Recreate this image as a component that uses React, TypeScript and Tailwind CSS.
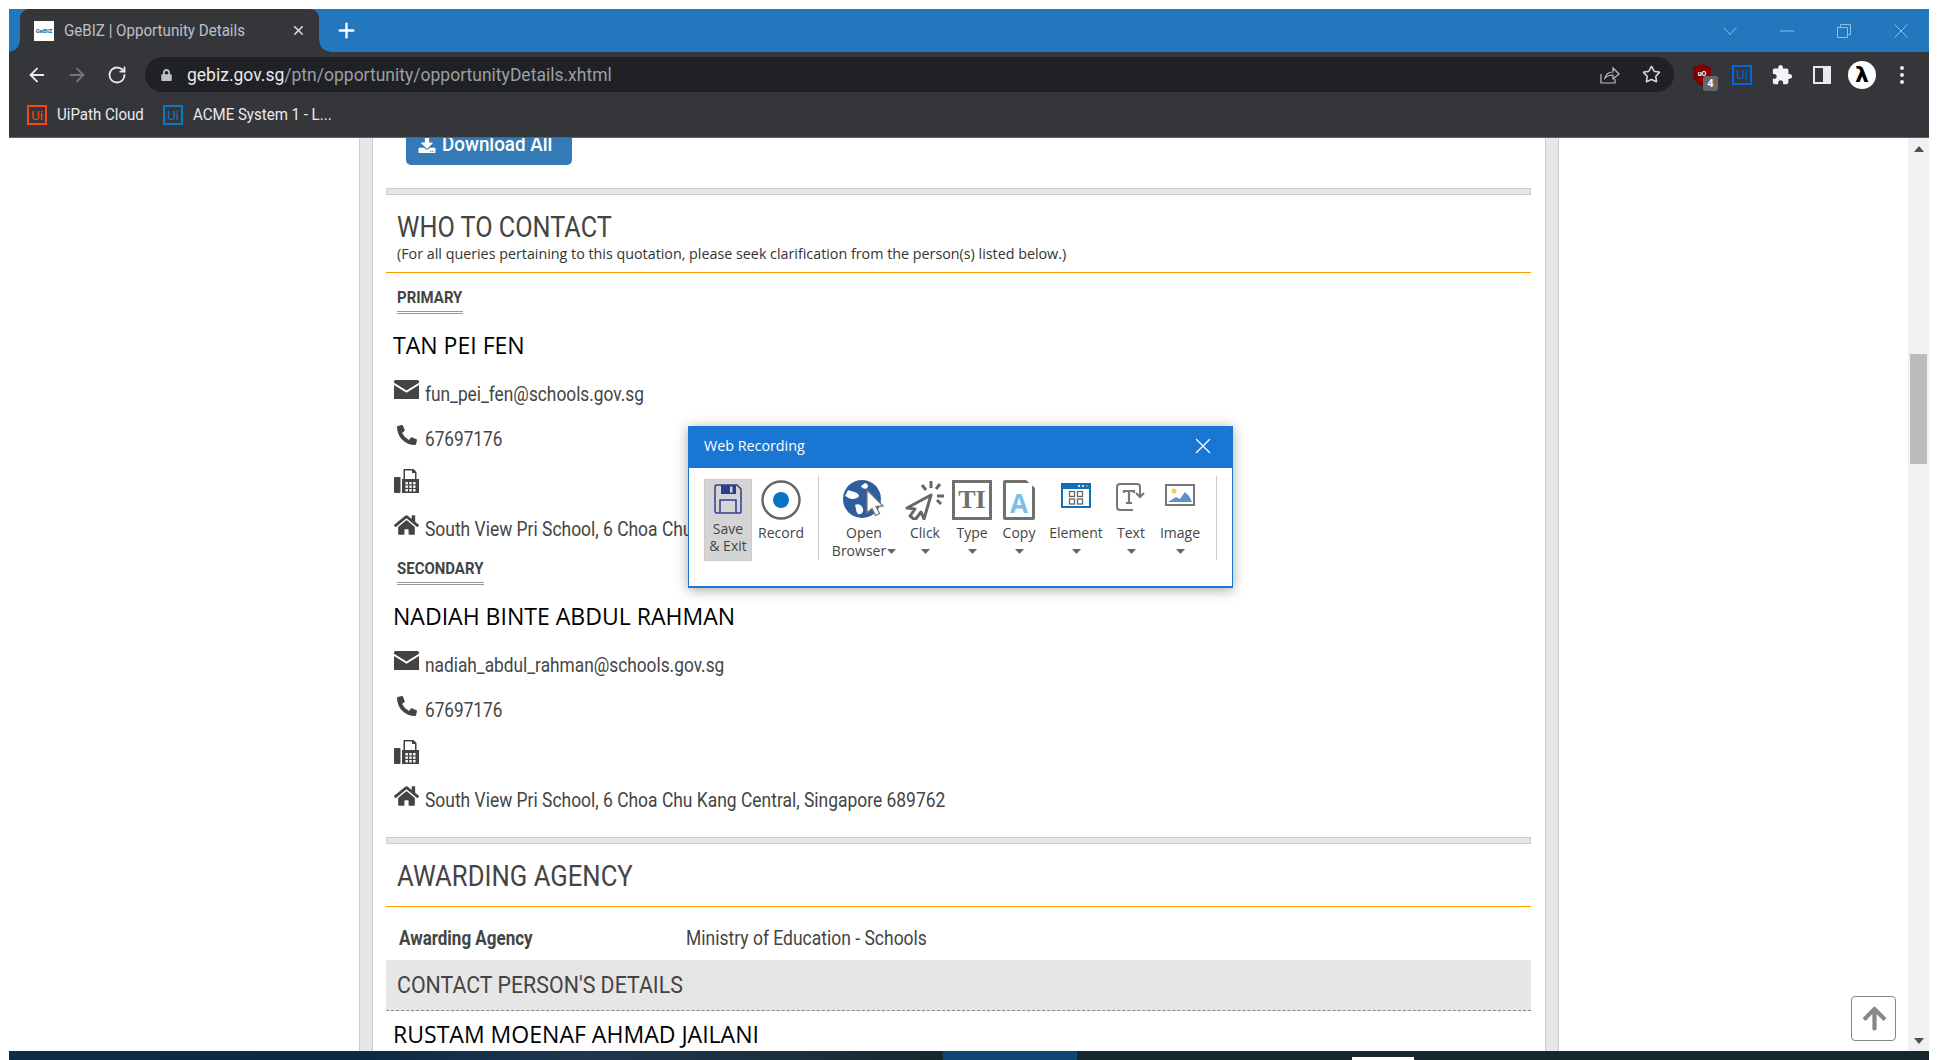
import React from "react";
import { ArrowLeft, ArrowRight, RotateCw, Star, X, Plus } from "lucide-react";
import { FaHome, FaPhoneAlt, FaDownload, FaArrowUp, FaLock } from "react-icons/fa";

const Caret = () => (
  <svg width="9" height="5" viewBox="0 0 9 5" className="shrink-0"><path d="M0 0h9L4.500 5z" fill="#666" /></svg>
);

const UiLogo = ({ c, t }: { c: string; t: string }) => (
  <span className="flex h-[20px] w-[20px] items-center justify-center border-2 text-[13px] leading-none" style={{ borderColor: c, color: t, fontFamily: "Roboto, sans-serif" }}>Ui</span>
);

const Envelope = () => (
  <svg className="-translate-y-[5px]" width="25" height="19" viewBox="0 0 25 19"><path d="M0 1.500A1.500 1.500 0 011.500 0h22A1.500 1.500 0 0125 1.500v1.200L12.500 10.500 0 2.700z" fill="#444" /><path d="M0 5l12.500 7.800L25 5v14H0z" fill="#444" /></svg>
);

const Fax = () => (
  <svg width="25" height="24" viewBox="0 0 25 24" fill="#444">
    <rect x="0" y="8" width="6.500" height="16" rx="1" />
    <path d="M8 10h1.500V0h10l3 3v7H25v14H8z" />
    <path d="M11 1.500h7V4h3v6H11z" fill="#fff" />
    <g fill="#fff"><rect x="11.500" y="13" width="2.400" height="2.400" /><rect x="15.300" y="13" width="2.400" height="2.400" /><rect x="19.100" y="13" width="2.400" height="2.400" /><rect x="11.500" y="16.500" width="2.400" height="2.400" /><rect x="15.300" y="16.500" width="2.400" height="2.400" /><rect x="19.100" y="16.500" width="2.400" height="2.400" /><rect x="11.500" y="20" width="2.400" height="2.400" /><rect x="15.300" y="20" width="2.400" height="2.400" /><rect x="19.100" y="20" width="2.400" height="2.400" /></g>
  </svg>
);

function ToolBtn({ w, ml, label, icon, label2 }: { w: string; ml: string; label: string; icon: React.ReactNode; label2?: boolean }) {
  return (
    <div className={`flex flex-col items-center ${w} ${ml}`}>
      <div className="flex h-[45px] w-full items-start justify-center">{icon}</div>
      <div className="text-[14px] leading-[18px] text-[#444] whitespace-nowrap">{label}</div>
      {label2 ? (
        <div className="flex items-center gap-[1px] text-[14px] leading-[18px] text-[#444]">Browser<Caret /></div>
      ) : (
        <div className="flex h-[18px] items-center"><Caret /></div>
      )}
    </div>
  );
}

function Person({ name, email, nameShift }: { name: string; email: string; nameShift?: string }) {
  return (
    <>
      <div className={`mt-[16px] flex h-[30px] items-center pl-[7px] font-['Open_Sans'] text-[24px] text-black ${nameShift ?? ""}`}>
        <span className="inline-block origin-left scale-x-[0.96] whitespace-nowrap">{name}</span>
      </div>
      <div className="mt-[19px] flex h-[30px] items-center pl-[8px] text-[20px] text-[#444]">
        <Envelope />
        <span className="ml-[6px] inline-block origin-left scale-x-[0.865] whitespace-nowrap">{email}</span>
      </div>
      <div className="mt-[15px] flex h-[30px] items-center pl-[8px] text-[20px] text-[#444]">
        <span className="flex w-[25px] justify-center"><FaPhoneAlt className="h-[20px] w-[20px] -translate-y-[4px] text-[#444]" /></span>
        <span className="ml-[6px] inline-block origin-left scale-x-[0.86] whitespace-nowrap">67697176</span>
      </div>
      <div className="mt-[15px] flex h-[30px] items-start pl-[8px]">
        <Fax />
      </div>
      <div className="mt-[15px] flex h-[30px] items-center pl-[8px] text-[20px] text-[#444]">
        <FaHome className="h-[24px] w-[25px] -translate-y-[4px] text-[#444]" />
        <span className="ml-[6px] inline-block origin-left scale-x-[0.872] whitespace-nowrap">South View Pri School, 6 Choa Chu Kang Central, Singapore 689762</span>
      </div>
    </>
  );
}

function SubHead({ text, w }: { text: string; w: string }) {
  return (
    <div className={`ml-[11px] flex h-[26px] items-center border-b-[3px] border-double border-[#999] box-content ${w} text-[17px] font-bold text-[#444]`}>
      <span className="inline-block origin-left scale-x-[0.88] whitespace-nowrap">{text}</span>
    </div>
  );
}

export default function App() {
  return (
    <div className="relative h-[1060px] w-[1938px] overflow-hidden bg-white pl-[9px] pt-[9px] font-['Roboto',sans-serif]">
      <div className="flex h-[1042px] w-[1920px] flex-col">
        {/* tab strip */}
        <div className="flex h-[43px] shrink-0 items-stretch bg-[#2377bd]">
          <div className="relative ml-[11px] flex w-[299px] items-center rounded-t-[9px] bg-[#35363a] pl-[14px]">
            <span className="absolute -left-[11px] bottom-0 h-[11px] w-[11px] bg-[radial-gradient(circle_at_0_0,#2377bd_10px,#35363a_11px)]" />
            <span className="absolute -right-[11px] bottom-0 h-[11px] w-[11px] bg-[radial-gradient(circle_at_100%_0,#2377bd_10px,#35363a_11px)]" />
            <span className="flex h-[20px] w-[20px] items-center justify-center bg-white text-[6px] font-bold leading-none text-[#2a5a9a]">GeBIZ</span>
            <span className="ml-[10px] inline-block origin-left scale-x-[0.945] whitespace-nowrap text-[16px] text-[#bdc1c6]">GeBIZ | Opportunity Details</span>
            <X className="absolute right-[13px] top-[14px] h-[15px] w-[15px] text-[#dadce0]" strokeWidth={2.5} />
          </div>
          <div className="ml-[16px] flex items-center"><Plus className="h-[23px] w-[23px] text-white" strokeWidth={2.5} /></div>
          <div className="ml-auto flex items-center text-[#8fbfe6]">
            <div className="flex w-[57px] justify-center"><svg width="14" height="8" viewBox="0 0 14 8" fill="none" stroke="currentColor"><path d="M.5.500L7 7.500l6.500-7" /></svg></div>
            <div className="flex w-[57px] justify-center"><svg width="14" height="2" viewBox="0 0 14 2" stroke="currentColor"><path d="M0 1h14" /></svg></div>
            <div className="flex w-[57px] justify-center"><svg width="14" height="14" viewBox="0 0 14 14" fill="none" stroke="currentColor"><path d="M.5 3.500h10v10H.5zM3.500 3.500V.5h10v10h-3" /></svg></div>
            <div className="flex w-[57px] justify-center"><svg width="14" height="14" viewBox="0 0 14 14" fill="none" stroke="currentColor"><path d="M.5.500l13 13M13.500.500l-13 13" /></svg></div>
          </div>
        </div>

        {/* toolbar */}
        <div className="flex h-[44px] shrink-0 items-start bg-[#35363a] pl-[8px] pt-[5px]">
          <div className="flex h-[35px] w-[40px] items-center justify-center"><ArrowLeft className="h-[22px] w-[22px] text-[#e8eaed]" strokeWidth={2} /></div>
          <div className="flex h-[35px] w-[40px] items-center justify-center"><ArrowRight className="h-[22px] w-[22px] text-[#75777a]" strokeWidth={2} /></div>
          <div className="flex h-[35px] w-[40px] items-center justify-center"><RotateCw className="h-[20px] w-[20px] text-[#e8eaed]" strokeWidth={2.2} /></div>
          <div className="ml-[8px] flex h-[35px] w-[1529px] items-center rounded-full bg-[#202124] pl-[16px]">
            <FaLock className="h-[12px] w-[11px] text-[#bdc1c6]" />
            <span className="ml-[15px] inline-block origin-left scale-x-[0.973] whitespace-nowrap text-[18px]">
              <span className="text-[#e8eaed]">gebiz.gov.sg</span><span className="text-[#9aa0a6]">/ptn/opportunity/opportunityDetails.xhtml</span>
            </span>
            <svg className="ml-auto" width="20" height="18" viewBox="0 0 20 18" fill="none" stroke="#bdc1c6" strokeWidth="1.2"><path d="M1 8v9h14v-4" /><path d="M5 12c1-4 4-6 8-6V2l6 6-6 5V9c-3 0-6 1-8 3z" /></svg>
            <Star className="ml-[22px] mr-[13px] h-[19px] w-[19px] text-[#d5d7da]" strokeWidth={2} />
          </div>
          <div className="ml-[8px] flex h-[35px] w-[40px] items-center justify-center">
            <span className="relative block h-[22px] w-[20px]">
              <svg width="20" height="22" viewBox="0 0 20 22"><path d="M10 0l9 3v8c0 5-4 9-9 11C5 20 1 16 1 11V3z" fill="#800000" /><text x="10" y="12" textAnchor="middle" fontSize="7" fontWeight="700" fill="#fff" fontFamily="Roboto">uO</text></svg>
              <span className="absolute left-[11px] top-[12px] flex h-[15px] w-[15px] items-center justify-center rounded-[2px] bg-[#666] text-[11px] font-bold leading-none text-white">4</span>
            </span>
          </div>
          <div className="flex h-[35px] w-[40px] items-center justify-center"><UiLogo c="#0067df" t="#0067df" /></div>
          <div className="flex h-[35px] w-[40px] items-center justify-center">
            <svg width="22" height="22" viewBox="0 0 24 24" fill="#f1f3f4"><path d="M20.500 11H19V7c0-1.100-.9-2-2-2h-4V3.500C13 2.120 11.880 1 10.500 1S8 2.120 8 3.500V5H4c-1.100 0-1.990.9-1.990 2v3.800H3.500c1.490 0 2.700 1.210 2.700 2.700s-1.210 2.700-2.700 2.700H2V20c0 1.100.9 2 2 2h3.800v-1.500c0-1.490 1.210-2.700 2.700-2.700 1.490 0 2.700 1.210 2.700 2.700V22H17c1.100 0 2-.9 2-2v-4h1.500c1.380 0 2.500-1.120 2.500-2.500S21.880 11 20.500 11z" /></svg>
          </div>
          <div className="flex h-[35px] w-[40px] items-center justify-center"><span className="flex h-[18px] w-[18px] border-2 border-[#e8eaed] bg-[#35363a]"><span className="ml-auto h-full w-[6px] bg-[#e8eaed]" /></span></div>
          <div className="flex h-[35px] w-[40px] items-center justify-center"><span className="flex h-[28px] w-[28px] items-center justify-center rounded-full bg-white font-['DejaVu_Sans'] text-[22px] font-bold leading-none text-black">λ</span></div>
          <div className="flex h-[35px] w-[40px] flex-col items-center justify-center gap-[3px]">
            <span className="h-[4px] w-[4px] rounded-full bg-[#e8eaed]" /><span className="h-[4px] w-[4px] rounded-full bg-[#e8eaed]" /><span className="h-[4px] w-[4px] rounded-full bg-[#e8eaed]" />
          </div>
        </div>

        {/* bookmarks */}
        <div className="flex h-[42px] shrink-0 items-center border-b border-[#5f6368] bg-[#35363a] pb-[3px] pl-[18px] text-[16px] text-[#e8eaed]">
          <UiLogo c="#fa4616" t="#fa4616" />
          <span className="ml-[10px] inline-block w-[106px] origin-left scale-x-[0.94] whitespace-nowrap">UiPath Cloud</span>
          <UiLogo c="#0a7ac4" t="#0a7ac4" />
          <span className="ml-[10px] inline-block origin-left scale-x-[0.94] whitespace-nowrap">ACME System 1 - L...</span>
        </div>

        {/* page */}
        <div className="flex min-h-0 flex-1">
          <div className="h-full w-[1899px] overflow-hidden pl-[350px]">
            <div className="h-full w-[1200px] border-x border-[#ccc] bg-[#e6e6e6] px-[12px]">
              <div className="h-full overflow-hidden border-x border-[#ccc] bg-white pl-[13px] pr-[14px]">
                <button className="-mt-[15px] ml-[20px] flex h-[42px] w-[166px] items-center rounded-[5px] bg-[#337ab7] pl-[12px] text-[20px] font-medium text-white">
                  <FaDownload className="h-[17px] w-[18px]" />
                  <span className="ml-[6px] inline-block origin-left scale-x-[0.94] whitespace-nowrap">Download All</span>
                </button>
                <div className="mt-[23px] h-[7px] border border-[#ccc] bg-[#e6e6e6]" />
                <div className="ml-[11px] mt-[12px] flex h-[40px] items-center pt-[2px] text-[29px] text-[#444]">
                  <span className="inline-block origin-left scale-x-[0.87] whitespace-nowrap">WHO TO CONTACT</span>
                </div>
                <div className="ml-[11px] flex h-[14px] items-center font-['Open_Sans'] text-[14.3px] text-[#333]">
                  <span className="whitespace-nowrap">(For all queries pertaining to this quotation, please seek clarification from the person(s) listed below.)</span>
                </div>
                <div className="mb-[12px] mt-[11px] h-[1px] bg-[#f90]" />
                <SubHead text="PRIMARY" w="w-[66px]" />
                <Person name="TAN PEI FEN" email="fun_pei_fen@schools.gov.sg" />
                <div className="mt-[12px]" />
                <SubHead text="SECONDARY" w="w-[87px]" />
                <Person name="NADIAH BINTE ABDUL RAHMAN" email="nadiah_abdul_rahman@schools.gov.sg" />
                <div className="mt-[22px] h-[7px] border border-[#ccc] bg-[#e6e6e6]" />
                <div className="ml-[11px] mt-[12px] flex h-[40px] items-center pt-[2px] text-[29px] text-[#444]">
                  <span className="inline-block origin-left scale-x-[0.885] whitespace-nowrap">AWARDING AGENCY</span>
                </div>
                <div className="mt-[10px] h-[1px] bg-[#f90]" />
                <div className="mt-[16px] flex h-[30px] items-center pl-[13px] text-[20px] text-[#444]">
                  <span className="inline-block w-[287px] origin-left scale-x-[0.85] whitespace-nowrap font-bold">Awarding Agency</span>
                  <span className="inline-block origin-left scale-x-[0.875] whitespace-nowrap">Ministry of Education - Schools</span>
                </div>
                <div className="mt-[7px] flex h-[51px] items-center border-b border-dashed border-[#888] bg-[#e6e6e6] pl-[11px] text-[24px] text-[#444]">
                  <span className="inline-block origin-left scale-x-[0.89] whitespace-nowrap">CONTACT PERSON'S DETAILS</span>
                </div>
                <div className="mt-[8px] flex h-[30px] items-center pl-[7px] font-['Open_Sans'] text-[24px] text-black">
                  <span className="inline-block origin-left scale-x-[0.96] whitespace-nowrap">RUSTAM MOENAF AHMAD JAILANI</span>
                </div>
              </div>
            </div>
          </div>
          {/* scrollbar */}
          <div className="flex h-full w-[21px] flex-col items-center bg-[#f1f1f1]">
            <div className="flex h-[21px] items-center justify-center"><svg width="10" height="6" viewBox="0 0 10 6"><path d="M5 0l5 6H0z" fill="#505050" /></svg></div>
            <div className="mt-[195px] h-[110px] w-[17px] bg-[#bcbcbc]" />
            <div className="mt-auto flex h-[21px] items-center justify-center"><svg width="10" height="6" viewBox="0 0 10 6"><path d="M5 6l5-6H0z" fill="#505050" /></svg></div>
          </div>
        </div>
      </div>

      {/* taskbar */}
      <div className="flex h-[9px] w-[1920px] bg-[linear-gradient(90deg,#0e2c44_0%,#0b2a42_18%,#20364f_30%,#1a2f3a_42%,#17292e_48%)]">
        <div className="ml-[934px] h-full w-[134px] bg-[#0f4673]" />
        <div className="h-full flex-1 bg-[#16282d] pt-[6px]"><div className="ml-[275px] h-[3px] w-[62px] bg-white" /></div>
      </div>

      {/* back to top */}
      <div className="absolute left-[1851px] top-[996px] flex h-[45px] w-[45px] items-center justify-center rounded-[4px] border border-[#888] bg-white">
        <FaArrowUp className="h-[27px] w-[27px] translate-x-[1px] text-[#888]" />
      </div>

      {/* Web Recording dialog */}
      <div className="absolute left-[688px] top-[426px] h-[162px] w-[545px] border-x border-b-2 border-[#1976d2] bg-white font-['Open_Sans'] shadow-[0_2px_12px_rgba(0,0,0,0.35)]">
        <div className="flex h-[42px] items-center justify-between bg-[#1976d2] pb-[2px] pl-[15px] pr-[16px] text-[14.3px] text-white">
          <span>Web Recording</span>
          <X className="h-[26px] w-[26px]" strokeWidth={1.2} />
        </div>
        <div className="flex items-start pl-[15px] pt-[11px]">
          <div className="flex h-[82px] w-[48px] flex-col items-center border border-[#ccc] bg-[#d4d4d4]">
            <div className="flex h-[40px] items-start pt-[4px]">
              <svg width="28" height="30" viewBox="0 0 28 30" fill="none"><path d="M1 3a2 2 0 012-2h20l4 4v23a1 1 0 01-1 1H3a2 2 0 01-2-2z" stroke="#2e3f8f" strokeWidth="1.500" /><path d="M7 1h15v9H7z" fill="#2e3f8f" /><path d="M16 2.500h2.500v6H16z" fill="#d4d4d4" /><path d="M6 29V16h16v13" stroke="#2e3f8f" strokeWidth="1.500" /></svg>
            </div>
            <div className="text-[14px] leading-[17px] text-[#444]">Save</div>
            <div className="whitespace-nowrap text-[14px] leading-[17px] text-[#444]">&amp; Exit</div>
          </div>
          <div className="ml-[6px] flex w-[46px] flex-col items-center">
            <div className="flex h-[45px] items-start pt-[1px]">
              <svg width="40" height="40" viewBox="0 0 40 40"><circle cx="20" cy="20" r="18.500" fill="none" stroke="#666" strokeWidth="2.500" /><circle cx="20" cy="20" r="8" fill="#0a74c4" /></svg>
            </div>
            <div className="text-[14px] leading-[18px] text-[#444]">Record</div>
          </div>
          <div className="ml-[14px] mt-[-3px] h-[84px] w-px bg-[#ccc]" />
          <ToolBtn w="w-[76px]" ml="ml-[7px]" label="Open" label2 icon={
            <svg width="42" height="40" viewBox="0 0 42 40"><circle cx="19" cy="20" r="19" fill="#2f5d9e" /><path d="M5 11c4 2 7 1 10 4s-2 5-6 5-5-3-7-3zM12 26c3-2 7 0 8 4s-3 6-5 5-2-7-3-9zM22 4c3 1 4 3 2 5s-5 0-6-2z" fill="#fff" /><path d="M24 11l16 16-7 .5 3.500 7-4 2-3.500-7-5 4.500z" fill="#fff" stroke="#777" strokeWidth="1.300" /></svg>
          } />
          <ToolBtn w="w-[40px]" ml="ml-[3px]" label="Click" icon={
            <svg width="40" height="41" viewBox="0 0 40 41" fill="none" stroke="#666"><path d="M26 16L2 29l8 1-5 7 5 4 6-8 3 7z" strokeWidth="3" strokeLinejoin="round" /><path d="M26 2v7M17 6l4 5M35 5l-4 5M39 17h-7M36 25l-4-4" strokeWidth="3" /></svg>
          } />
          <ToolBtn w="w-[40px]" ml="ml-[7px]" label="Type" icon={
            <div className="relative mt-[1px] flex h-[40px] w-[40px] items-center justify-center border-[3px] border-[#707070] font-['Liberation_Serif'] text-[26px] font-bold leading-none text-[#707070]">TI</div>
          } />
          <ToolBtn w="w-[40px]" ml="ml-[7px]" label="Copy" icon={
            <div className="relative mt-[1px] flex h-[40px] w-[32px] items-end justify-center rounded-[2px] border-[3px] border-[#707070] pb-[1px] text-[26px] font-bold leading-none text-[#7cc0e8] [clip-path:polygon(0_0,72%_0,100%_20%,100%_100%,0_100%)]">A</div>
          } />
          <ToolBtn w="w-[60px]" ml="ml-[7px]" label="Element" icon={
            <svg className="mt-[4px]" width="30" height="25" viewBox="0 0 30 25"><rect width="30" height="25" fill="#0f72b5" /><rect x="2" y="6" width="26" height="17" fill="#fff" /><rect x="17" y="2" width="2" height="2" fill="#cfe4f5" /><rect x="21" y="2" width="2" height="2" fill="#cfe4f5" /><rect x="25" y="2" width="2" height="2" fill="#e85a6a" /><g fill="none" stroke="#666" strokeWidth="1.300"><rect x="8.500" y="8.500" width="5" height="5" /><rect x="16.500" y="8.500" width="5" height="5" /><rect x="8.500" y="16" width="5" height="5" /><rect x="16.500" y="16" width="5" height="5" /></g></svg>
          } />
          <ToolBtn w="w-[40px]" ml="ml-[5px]" label="Text" icon={
            <svg className="mt-[4px]" width="30" height="28" viewBox="0 0 30 28" fill="none" stroke="#777" strokeWidth="2"><path d="M17 27H4a3 3 0 01-3-3V4a3 3 0 013-3h17a3 3 0 013 3v9" /><path d="M20 10l4 4 4-4" /><path d="M8 10V8h10v2M13 8v12M10 20h6" strokeWidth="2.200" /></svg>
          } />
          <ToolBtn w="w-[50px]" ml="ml-[4px]" label="Image" icon={
            <svg className="mt-[5px]" width="30" height="22" viewBox="0 0 30 22"><rect x="1" y="1" width="28" height="20" fill="#fff" stroke="#777" strokeWidth="2" /><circle cx="9" cy="7" r="2.500" fill="#f0d060" /><path d="M3 18l8-5 4 2 5-7 4 4 3 6z" fill="#5f8fcc" /></svg>
          } />
          <div className="ml-[11px] mt-[-3px] h-[84px] w-px bg-[#ccc]" />
        </div>
      </div>
    </div>
  );
}
